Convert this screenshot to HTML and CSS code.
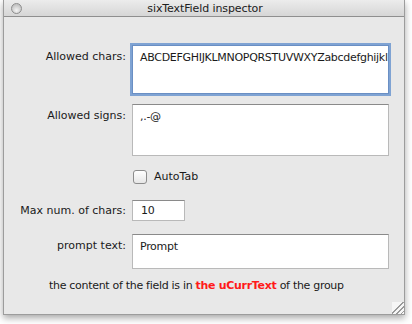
FILE: index.html
```html
<!DOCTYPE html>
<html lang="en">
<head>
  <meta charset="UTF-8">
  <title>sixTextField inspector</title>
  <link rel="stylesheet" href="styles.css">
</head>
<body>
  <div class="window">
    <div class="titlebar">
      <span class="close-btn"></span>
      <span class="title">sixTextField inspector</span>
    </div>

    <div class="content">
      <label class="label">Allowed chars:</label>
      <div class="field area focused">ABCDEFGHIJKLMNOPQRSTUVWXYZabcdefghijkl</div>

      <label class="label row-signs">Allowed signs:</label>
      <div class="field area row-signs">,.-@</div>

      <span class="row-check"></span>
      <label class="check row-check">
        <span class="check-box"></span>
        <span>AutoTab</span>
      </label>

      <label class="label label-mid row-max">Max num. of chars:</label>
      <div class="field small row-max">10</div>

      <label class="label row-prompt">prompt text:</label>
      <div class="field prompt row-prompt">Prompt</div>

      <p class="note">the content of the field is in <strong>the uCurrText</strong> of the group</p>
    </div>

    <div class="grip"></div>
  </div>
</body>
</html>
```

FILE: styles.css
```css
:root {
  --window-bg: #e8e8e8;
  --edge: #9c9c9c;
  --field-border: #b9b9b9;
  --field-top: #8a8a8a;
  --focus: #7fa3d3;
  --text: #1a1a1a;
  --red: #ff1a1a;
}

* {
  box-sizing: border-box;
  margin: 0;
  padding: 0;
}

body {
  background: #ffffff;
  font-family: 'DejaVu Sans', sans-serif;
  color: var(--text);
  width: 412px;
  height: 324px;
  overflow: hidden;
}

.window {
  position: relative;
  width: 402px;
  height: 315px;
  margin-left: 3px;
  background: var(--window-bg);
  border: 1px solid var(--edge);
  border-top: none;
  box-shadow: 0 3px 7px rgba(0, 0, 0, 0.35);
}

.titlebar {
  position: relative;
  height: 17px;
  background: linear-gradient(#ececec, #d6d6d6);
  border-bottom: 1px solid #8f8f8f;
  display: flex;
  align-items: center;
  justify-content: center;
}

.close-btn {
  position: absolute;
  left: 7px;
  top: 3px;
  width: 11px;
  height: 11px;
  border-radius: 50%;
  border: 1px solid #8d8d8d;
  background: radial-gradient(circle at 50% 70%, #f4f4f4, #c4c4c4 70%);
}

.title {
  font-size: 11px;
  line-height: 13px;
  color: #202020;
  letter-spacing: -0.1px;
  margin-left: 2px;
}

.content {
  display: grid;
  grid-template-columns: 122px 257px;
  column-gap: 6px;
  padding-top: 28px;
}

.label {
  font-size: 11px;
  line-height: 13px;
  text-align: right;
  padding-top: 5px;
}

.field {
  background: #ffffff;
  border: 1px solid var(--field-border);
  border-top-color: var(--field-top);
  font-size: 11px;
  line-height: 13px;
  letter-spacing: -0.3px;
  padding: 5px 7px;
  white-space: nowrap;
  overflow: hidden;
}

.area {
  height: 49px;
}

.focused {
  border-color: #6a8fc4;
  box-shadow: 0 0 0 2px var(--focus);
}

.row-signs {
  margin-top: 10px;
}

.area.row-signs {
  height: 52px;
}

.row-check {
  margin-top: 14px;
}

.check {
  display: flex;
  align-items: center;
  gap: 7px;
  font-size: 11px;
  line-height: 14px;
}

.check-box {
  width: 14px;
  height: 14px;
  margin-left: 1px;
  border: 1px solid #8c8c8c;
  border-radius: 3px;
  background: linear-gradient(#ffffff, #e6e6e6);
}

.row-max {
  margin-top: 16px;
}

.label-mid {
  padding-top: 0;
  align-self: center;
}

.small {
  width: 53px;
  height: 21px;
  padding: 3px 8px;
}

.row-prompt {
  margin-top: 13px;
}

.prompt {
  height: 35px;
}

.note {
  grid-column: 1 / 3;
  margin-top: 10px;
  padding-left: 45px;
  font-size: 11px;
  line-height: 13px;
  letter-spacing: -0.3px;
}

.note strong {
  color: var(--red);
}

.grip {
  position: absolute;
  right: 0;
  bottom: 0;
  width: 12px;
  height: 12px;
  background:
    linear-gradient(135deg, transparent 45%, #9a9a9a 45%, #9a9a9a 52%, transparent 52%,
      transparent 65%, #9a9a9a 65%, #9a9a9a 72%, transparent 72%,
      transparent 84%, #9a9a9a 84%, #9a9a9a 91%, transparent 91%),
    #f6f6f6;
}
```
